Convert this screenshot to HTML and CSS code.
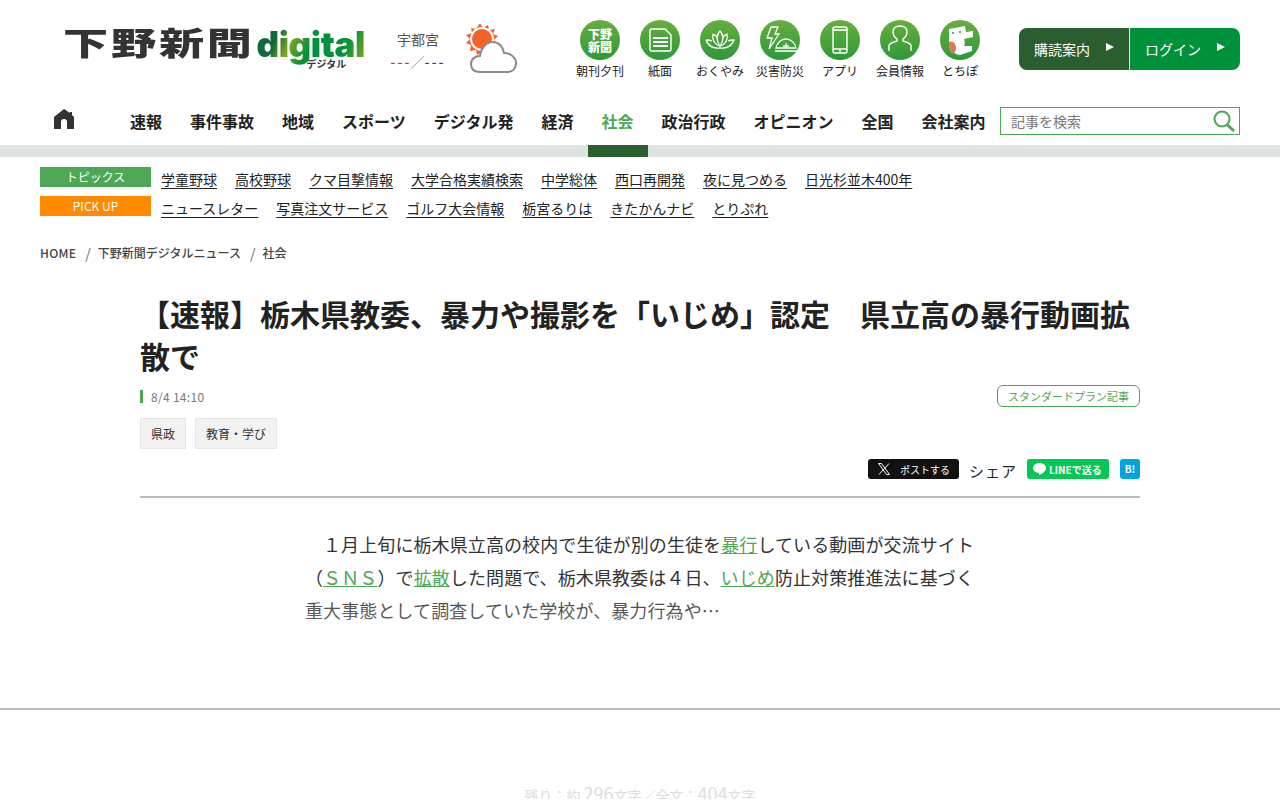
FILE: index.html
```html
<!DOCTYPE html>
<html lang="ja">
<head>
  <meta charset="UTF-8" />
  <meta name="viewport" content="width=device-width, initial-scale=1" />
  <title>下野新聞デジタル</title>
  <link rel="stylesheet" href="styles.css">
</head>
<body>

  <!-- ヘッダー -->
  <header class="header">
    <a class="logo">
      <span class="logo-name">下野新聞</span>
      <span class="logo-digital">digital<span class="logo-kana">デジタル</span></span>
    </a>

    <div class="weather">
      <div class="weather-text">
        <div class="weather-city">宇都宮</div>
        <div class="weather-temp"><span class="temp-high">---</span><span class="temp-sep">／</span><span class="temp-low">---</span></div>
      </div>
      <svg class="weather-icon" width="52" height="52" viewBox="0 0 52 52">
        <g transform="translate(-4,-1)">
          <polygon fill="#f4622a" points="18,0 21,5 26,2 27,7 33,6 31,11 36,13 32,17 35,21 30,23 31,28 26,27 24,32 20,29 15,32 14,27 8,28 9,22 4,20 8,16 4,12 10,10 9,5 14,6" />
          <circle cx="20" cy="16" r="12" fill="#fff" />
          <circle cx="20" cy="16" r="10" fill="#f4622a" />
        </g>
        <path d="M14 48 C7 48 5 44 5 40 C5 35 9 32 14 32 C15 24 20 18 27 18 C33 18 37 23 38 29 C45 29 50 34 50 39 C50 45 46 48 41 48 Z" fill="#fff" stroke="#8c8c8c" stroke-width="2" />
      </svg>
    </div>

    <nav class="quick">
      <a class="quick-item"><span class="quick-icon quick-word">下野<br>新聞</span>朝刊夕刊</a>
      <a class="quick-item"><span class="quick-icon">
        <svg width="40" height="40" viewBox="0 0 40 40" fill="none" stroke="#fff" stroke-width="1.4"><path d="M10 11 Q10 9 12 9 H25 L31 15 V29 Q31 31 29 31 H12 Q10 31 10 29 Z" /><path d="M13 18 H28 M13 22 H28 M13 26 H28" stroke-width="1.8" /></svg>
      </span>紙面</a>
      <a class="quick-item"><span class="quick-icon">
        <svg width="40" height="40" viewBox="0 0 40 40" fill="none" stroke="#fff" stroke-width="1.3"><path d="M20 11 C16 15 16 20 20 26 C24 20 24 15 20 11 Z" /><path d="M13 14 C12 19 14 24 20 26 C26 24 28 19 27 14 C25 15 24 16 23 17 M13 14 C15 15 16 16 17 17" /><path d="M6 20 C8 26 14 29 20 28 C26 29 32 26 34 20 C32 20 30 20 28 21 M6 20 C8 20 10 20 12 21" /></svg>
      </span>おくやみ</a>
      <a class="quick-item"><span class="quick-icon">
        <svg width="40" height="40" viewBox="0 0 40 40" fill="none" stroke="#fff" stroke-width="1.3"><path d="M11 7 H18 L15 14 H19 L9 29 L12 18 H7 Z" /><path d="M16 28 C17 22 22 19 26 19 C31 19 35 23 36 28 Z" /><path d="M15 31 H37 M23 26 H29 M26 23 V28" /></svg>
      </span>災害防災</a>
      <a class="quick-item"><span class="quick-icon">
        <svg width="40" height="40" viewBox="0 0 40 40" fill="none" stroke="#fff" stroke-width="1.4"><rect x="13" y="7" width="14" height="26" rx="2" /><path d="M13 10 H27 M13 29 H27" /><path d="M19 31 H21" /></svg>
      </span>アプリ</a>
      <a class="quick-item"><span class="quick-icon">
        <svg width="40" height="40" viewBox="0 0 40 40" fill="none" stroke="#fff" stroke-width="1.4"><path d="M9 31 V26 C9 24 11 23 14 22 L17 21 V19 C14 17 13 14 13 12 C13 8 16 6 20 6 C24 6 27 8 27 12 C27 14 26 17 23 19 V21 L26 22 C29 23 31 24 31 26 V31" /></svg>
      </span>会員情報</a>
      <a class="quick-item"><span class="quick-icon">
        <svg width="40" height="40" viewBox="0 0 40 40"><path d="M9 9 L25 6 L26 12 L33 11 V17 L24 19 C25 22 25 24 24 26 L32 26 V31 L20 35 C12 34 9 28 9 20 Z" fill="#fff" /><path d="M9 22 C13 20 16 24 16 28 C16 32 14 34 11 33 C9 30 8 26 9 22 Z" fill="#d9785c" /><circle cx="13" cy="13" r="1" fill="#2c9a3a" /><circle cx="20" cy="12" r="1" fill="#2c9a3a" /></svg>
      </span>とちぽ</a>
    </nav>

    <div class="member-btns">
      <a class="member-btn btn-dark">購読案内<span class="arrow"></span></a>
      <a class="member-btn btn-green">ログイン<span class="arrow"></span></a>
    </div>
  </header>

  <!-- グローバルナビ -->
  <div class="gnav">
    <a class="gnav-home">
      <svg width="22" height="20" viewBox="0 0 22 20"><path d="M11 0 L17 4 V3 H19 V6 L21 8 V20 H14 V13 C14 11 13 10 11 10 C9 10 8 11 8 13 V20 H1 V8 Z" fill="#333" /></svg>
    </a>
    <ul class="gnav-list">
      <li>速報</li>
      <li>事件事故</li>
      <li>地域</li>
      <li>スポーツ</li>
      <li>デジタル発</li>
      <li>経済</li>
      <li class="active">社会</li>
      <li>政治行政</li>
      <li>オピニオン</li>
      <li>全国</li>
      <li>会社案内</li>
    </ul>
    <div class="search-box">
      <input type="text" placeholder="記事を検索">
      <svg width="24" height="24" viewBox="0 0 24 24" fill="none" stroke="#4da755"><circle cx="10" cy="10" r="7.5" stroke-width="2" /><path d="M15 15.5 L22 22" stroke-width="3" /></svg>
    </div>
  </div>
  <div class="band"><span class="band-mark"></span></div>

  <!-- トピックス -->
  <div class="topics">
    <div class="topic-row">
      <span class="topic-label label-green">トピックス</span>
      <a>学童野球</a><a>高校野球</a><a>クマ目撃情報</a><a>大学合格実績検索</a><a>中学総体</a><a>西口再開発</a><a>夜に見つめる</a><a>日光杉並木400年</a>
    </div>
    <div class="topic-row">
      <span class="topic-label label-orange">PICK UP</span>
      <a>ニュースレター</a><a>写真注文サービス</a><a>ゴルフ大会情報</a><a>栃宮るりは</a><a>きたかんナビ</a><a>とりぷれ</a>
    </div>
  </div>

  <div class="breadcrumb">
    <span class="crumb-home">HOME</span><span class="crumb-sep">/</span><span>下野新聞デジタルニュース</span><span class="crumb-sep">/</span><span>社会</span>
  </div>

  <!-- 記事 -->
  <article class="article">
    <h1>【速報】栃木県教委、暴力や撮影を「いじめ」認定　県立高の暴行動画拡散で</h1>
    <div class="meta">
      <span class="date">8/4 14:10</span>
      <span class="plan">スタンダードプラン記事</span>
    </div>
    <div class="tags">
      <span class="tag">県政</span>
      <span class="tag">教育・学び</span>
    </div>
    <div class="share">
      <a class="share-x">
        <svg width="14" height="14" viewBox="0 0 14 14" fill="none" stroke="#fff"><path d="M1.5 1.5 H4.5 L12.5 12.5 H9.5 Z" /><path d="M12 1.5 L2 12.5" /></svg>
        ポストする
      </a>
      <span class="share-word">シェア</span>
      <a class="share-line">
        <svg width="15" height="14" viewBox="0 0 15 14"><path d="M7.5 1 C11.5 1 14 3.4 14 6.2 C14 9 10.5 11.5 7 13 L7 10.9 C3.5 10.8 1 8.8 1 6.2 C1 3.4 3.5 1 7.5 1 Z" fill="#fff" /></svg>
        LINEで送る
      </a>
      <a class="share-hatena">B!</a>
    </div>

    <div class="body-text">
      <p>１月上旬に栃木県立高の校内で生徒が別の生徒を<a>暴行</a>している動画が交流サイト（<a>ＳＮＳ</a>）で<a>拡散</a>した問題で、栃木県教委は４日、<a>いじめ</a>防止対策推進法に基づく重大事態として調査していた学校が、暴力行為や…</p>
      <div class="body-fade"></div>
    </div>
  </article>

  <!-- 残り文字数 -->
  <div class="remain">
    <p class="remain-text">残り：約 <b>296</b>文字／全文：<b>404</b>文字</p>
  </div>

</body>
</html>
```

FILE: styles.css
```css
* {
  box-sizing: border-box;
}

html, body {
  height: 800px;
  overflow: hidden;
}

body {
  margin: 0;
  font-family: "Noto Sans CJK JP", "Noto Sans", sans-serif;
  background-color: #fff;
  color: #222;
}

a {
  color: inherit;
  text-decoration: none;
}

/* ヘッダー */
.header {
  display: flex;
  height: 107px;
  padding: 20px 40px 0 65px;
}

.logo {
  display: flex;
  width: 300px;
  height: 56px;
  margin-top: 2px;
}

.logo-name {
  width: 194px;
  margin-left: -2px;
  font-size: 32px;
  font-weight: 900;
  line-height: 38px;
  color: #333;
  letter-spacing: 2px;
  white-space: nowrap;
  transform: scaleX(1.41);
  transform-origin: left top;
}

.logo-digital {
  position: relative;
  margin-top: 1px;
  font-family: Inter, "DejaVu Sans", sans-serif;
  font-size: 35px;
  font-weight: 900;
  line-height: 42px;
  letter-spacing: -0.4px;
  background: linear-gradient(115deg, #0f6b38 20%, #7aa51f 32%, #00923a 48%, #00923a 75%, #7aa51f 92%);
  -webkit-background-clip: text;
  background-clip: text;
  color: transparent;
}

.logo-kana {
  position: absolute;
  left: 50px;
  top: 35px;
  font-family: "Noto Sans CJK JP", sans-serif;
  font-size: 10px;
  font-weight: 700;
  line-height: 12px;
  letter-spacing: 0;
  color: #333;
}

.weather {
  display: flex;
  width: 180px;
  margin-left: 25px;
  margin-top: 4px;
}

.weather-text {
  width: 56px;
  padding-top: 3px;
  text-align: center;
}

.weather-city {
  font-size: 14px;
  line-height: 24px;
  color: #555;
}

.weather-temp {
  font-size: 14px;
  font-weight: 500;
  line-height: 20px;
  white-space: nowrap;
  width: 56px;
}

.temp-high {
  color: #f02020;
  letter-spacing: 2px;
}

.temp-low {
  color: #1040e0;
  letter-spacing: 2px;
}

.temp-sep {
  margin-left: -1px;
  color: #999;
  font-weight: 400;
}

.weather-icon {
  margin-left: 20px;
}

.quick {
  display: flex;
  width: 449px;
}

.quick-item {
  display: flex;
  flex-direction: column;
  align-items: center;
  width: 60px;
  font-size: 12px;
  line-height: 18px;
  color: #222;
  white-space: nowrap;
}

.quick-icon {
  display: flex;
  align-items: center;
  justify-content: center;
  width: 40px;
  height: 40px;
  margin-bottom: 2px;
  border-radius: 50%;
  background: linear-gradient(#68ae3e, #2d9a3a);
}

.quick-word {
  font-size: 12px;
  font-weight: 900;
  line-height: 13px;
  color: #fff;
  text-align: center;
}

.member-btns {
  display: flex;
  height: 42px;
  margin-top: 8px;
  width: 221px;
  border-radius: 8px;
  overflow: hidden;
  color: #fff;
  font-size: 14px;
}

.member-btn {
  display: flex;
  align-items: center;
  justify-content: space-between;
  padding: 0 15px;
}

.btn-dark {
  width: 111px;
  background-color: #2a5e2e;
  border-right: 1px solid #fff;
}

.btn-green {
  width: 110px;
  background-color: #00923a;
}

.arrow {
  width: 0;
  height: 0;
  border-left: 8px solid #fff;
  border-top: 4px solid transparent;
  border-bottom: 4px solid transparent;
  margin-bottom: 4px;
}

/* グローバルナビ */
.gnav {
  display: flex;
  height: 38px;
  padding: 0 40px 0 53px;
}

.gnav-home {
  width: 77px;
  padding-top: 2px;
}

.gnav-list {
  display: flex;
  gap: 28px;
  width: 870px;
  margin: 0;
  padding: 0;
  list-style: none;
  font-size: 16px;
  font-weight: 700;
  line-height: 28px;
  color: #222;
}

.gnav-list .active {
  color: #4da755;
}

.search-box {
  display: flex;
  align-items: center;
  justify-content: space-between;
  width: 240px;
  height: 28px;
  padding: 0 3px 0 10px;
  border: 1px solid #4da755;
}

.search-box input {
  width: 180px;
  border: none;
  outline: none;
  padding: 0;
  font-family: inherit;
  font-size: 14px;
}

.search-box input::placeholder {
  color: #777;
}

.band {
  height: 12px;
  background-color: #dde3df;
  padding-left: 588px;
}

.band-mark {
  display: block;
  width: 60px;
  height: 12px;
  background-color: #2a5e2e;
}

/* トピックス */
.topics {
  padding: 10px 40px 0;
}

.topic-row {
  display: flex;
  gap: 18px;
  height: 29px;
  font-size: 14px;
  line-height: 28px;
  color: #222;
}

.topic-row a {
  height: 22px;
  line-height: 28px;
  margin-top: -2px;
  text-decoration: underline;
  text-underline-offset: 3px;
}

.topic-label {
  width: 111px;
  height: 20px;
  margin-right: -8px;
  font-size: 12px;
  line-height: 20px;
  text-align: center;
  color: #fff;
}

.label-green {
  background-color: #4da755;
}

.label-orange {
  background-color: #ff8a00;
}

.breadcrumb {
  display: flex;
  padding: 18px 40px 0;
  font-size: 12px;
  font-weight: 500;
  line-height: 20px;
  color: #444;
}

.crumb-home {
  letter-spacing: 0.3px;
}

.crumb-sep {
  margin: 0 7px 0 9px;
  font-weight: 400;
  font-size: 14px;
  color: #666;
}

/* 記事 */
.article {
  width: 1000px;
  height: 445px;
  margin: 0 auto;
  padding-top: 29px;
}

.article h1 {
  margin: 0;
  font-size: 30px;
  font-weight: 700;
  line-height: 42px;
  color: #222;
}

.meta {
  display: flex;
  align-items: center;
  justify-content: space-between;
  height: 22px;
  margin-top: 9px;
}

.date {
  padding-left: 8px;
  border-left: 3px solid #4da755;
  font-size: 12px;
  line-height: 13px;
  letter-spacing: 0.3px;
  color: #777;
}

.plan {
  width: 143px;
  height: 22px;
  border: 1px solid #4da755;
  border-radius: 6px;
  font-size: 11px;
  line-height: 20px;
  text-align: center;
  color: #4da755;
}

.tags {
  display: flex;
  gap: 9px;
  margin-top: 11px;
}

.tag {
  height: 31px;
  padding: 0 10px;
  border: 1px solid #e6e6e6;
  background-color: #f2f2f2;
  font-size: 12px;
  line-height: 30px;
  color: #333;
}

.share {
  display: flex;
  align-items: flex-start;
  justify-content: flex-end;
  height: 39px;
  margin-top: 10px;
  border-bottom: 2px solid #bbb;
}

.share-x {
  display: flex;
  align-items: center;
  gap: 9px;
  width: 91px;
  height: 20px;
  padding-left: 9px;
  border-radius: 3px;
  background-color: #111;
  color: #fff;
  font-size: 10px;
}

.share-word {
  margin: 0 10px;
  font-size: 15px;
  line-height: 24px;
  letter-spacing: 1px;
  color: #222;
}

.share-line {
  display: flex;
  align-items: center;
  gap: 2px;
  width: 82px;
  height: 20px;
  padding-left: 5px;
  border-radius: 3px;
  background-color: #06c755;
  color: #fff;
  font-size: 10px;
  font-weight: 700;
}

.share-hatena {
  width: 20px;
  height: 20px;
  margin-left: 11px;
  border-radius: 3px;
  background-color: #00a4de;
  color: #fff;
  font-size: 10px;
  font-weight: 700;
  line-height: 20px;
  text-align: center;
}

.body-text {
  position: relative;
  width: 670px;
  margin: 30px auto 0;
}

.body-text p {
  margin: 0;
  font-size: 18px;
  line-height: 33px;
  letter-spacing: 0.1px;
  text-indent: 1em;
  color: #333;
}

.body-text a {
  color: #4da755;
  text-decoration: underline;
}

.body-fade {
  position: absolute;
  left: 0;
  right: 0;
  bottom: 0;
  height: 40px;
  background: linear-gradient(rgba(255,255,255,0), rgba(255,255,255,0.3));
}

.remain {
  height: 91px;
  padding-top: 71px;
  border-top: 2px solid #bbb;
  overflow: hidden;
}

.remain-text {
  margin: 0;
  font-size: 14px;
  line-height: 24px;
  text-align: center;
  color: #ddd;
}

.remain-text b {
  font-size: 18px;
  font-weight: 400;
}
```
